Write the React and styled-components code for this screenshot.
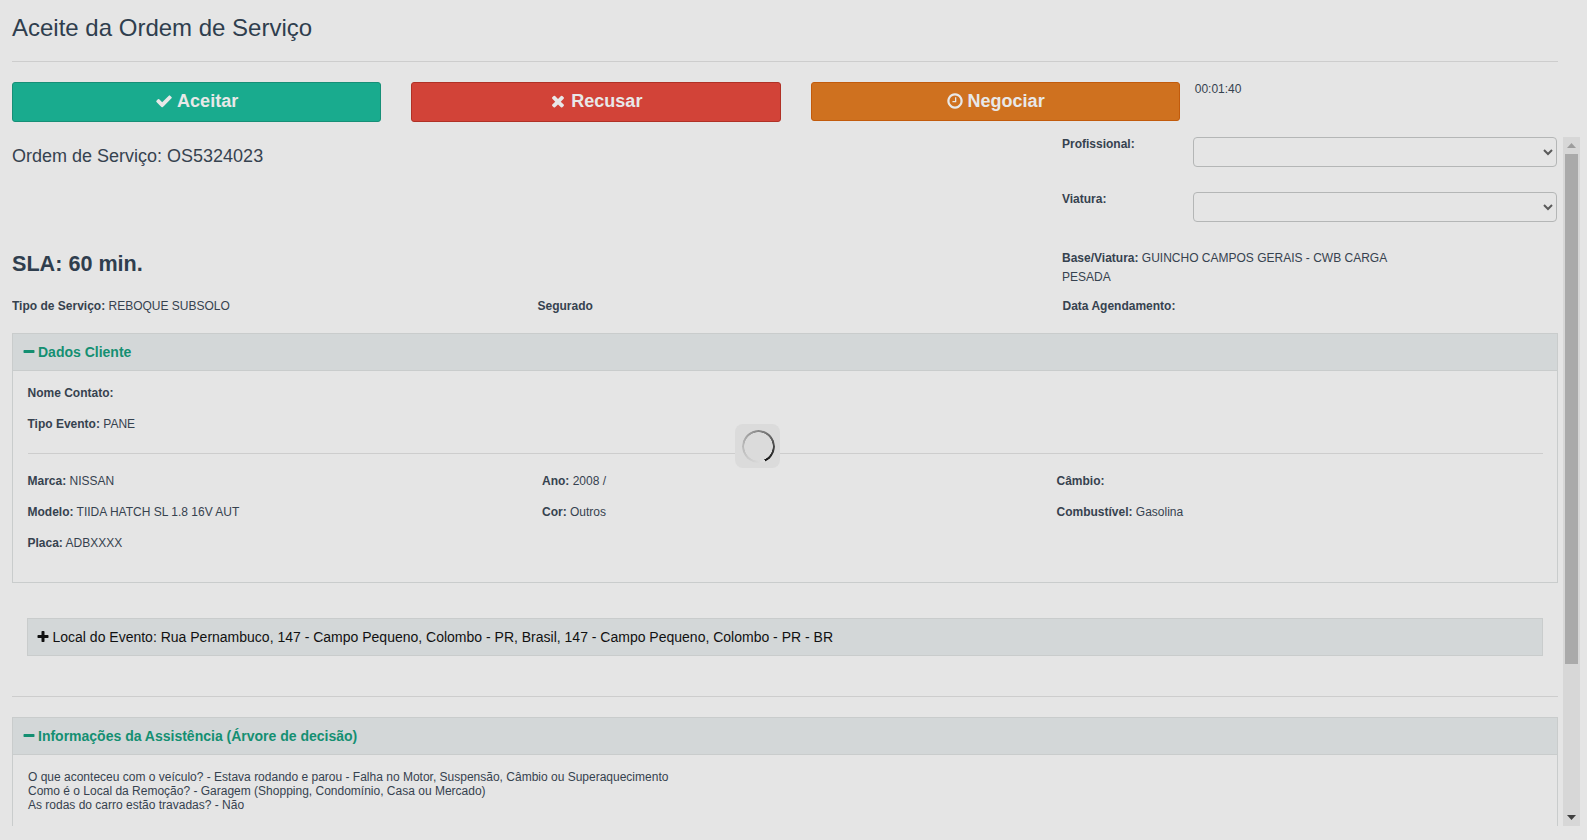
import React from "react";
import styled, { createGlobalStyle } from "styled-components";

const GlobalStyle = createGlobalStyle`
  html, body {
    margin: 0;
    padding: 0;
    background: #e5e5e5;
  }
  * {
    box-sizing: border-box;
  }
`;

const ICONS = {
  check: "M1671 566q0 40-28 68l-724 724-136 136q-28 28-68 28t-68-28l-136-136-362-362q-28-28-28-68t28-68l136-136q28-28 68-28t68 28l294 295 656-657q28-28 68-28t68 28l136 136q28 28 28 68z",
  times: "M1490 1322q0 40-28 68l-136 136q-28 28-68 28t-68-28l-294-294-294 294q-28 28-68 28t-68-28l-136-136q-28-28-28-68t28-68l294-294-294-294q-28-28-28-68t28-68l136-136q28-28 68-28t68 28l294 294 294-294q28-28 68-28t68 28l136 136q28 28 28 68t-28 68l-294 294 294 294q28 28 28 68z",
  clock: "M1024 544v448q0 14-9 23t-23 9h-320q-14 0-23-9t-9-23v-64q0-14 9-23t23-9h224v-352q0-14 9-23t23-9h64q14 0 23 9t9 23zm416 352q0-148-73-273t-198-198-273-73-273 73-198 198-73 273 73 273 198 198 273 73 273-73 198-198 73-273zm224 0q0 209-103 385.5t-279.5 279.5-385.5 103-385.5-103-279.5-279.5-103-385.5 103-385.5 279.5-279.5 385.5-103 385.5 103 279.5 279.5 103 385.5z",
  minus: "M1600 736v192q0 40-28 68t-68 28h-1216q-40 0-68-28t-28-68v-192q0-40 28-68t68-28h1216q40 0 68 28t28 68z",
  plus: "M1600 736v192q0 40-28 68t-68 28h-416v416q0 40-28 68t-68 28h-192q-40 0-68-28t-28-68v-416h-416q-40 0-68-28t-28-68v-192q0-40 28-68t68-28h416v-416q0-40 28-68t68-28h192q40 0 68 28t28 68v416h416q40 0 68 28t28 68z",
};

const Page = styled.div`
  position: relative;
  width: 1587px;
  height: 840px;
  overflow: hidden;
  padding-left: 12px;
  background: #e5e5e5;
  color: #36424f;
  font-family: "Liberation Sans", Arial, sans-serif;
  font-size: 12px;
`;
const Title = styled.h3`
  margin: 0;
  height: 61px;
  padding-top: 14px;
  font-size: 24px;
  font-weight: 400;
  line-height: 28px;
  color: #2f3e4e;
`;
const Divider = styled.hr`
  width: ${(props) => props.width || "1546px"};
  height: 1px;
  margin: ${(props) => props.margin || "0"};
  border: none;
  background: #cdcdcd;
`;
const Actions = styled.div`
  display: flex;
  gap: 30px;
  height: 55px;
  margin-top: 20px;
`;
const ActionButton = styled.button`
  display: flex;
  align-items: center;
  justify-content: center;
  gap: 4px;
  width: 369.25px;
  height: ${(props) => props.h || 40}px;
  padding: 0 0 ${(props) => (props.h || 40) - 38}px;
  border: 1px solid ${(props) => props.edge};
  border-radius: 3px;
  background: ${(props) => props.bg};
  color: #e8e8e8;
  font-family: inherit;
  font-size: 18px;
  font-weight: 700;
  svg {
    width: 18px;
    height: 18px;
  }
`;
const Timer = styled.span`
  margin-left: -15px;
  line-height: 14px;
`;
const ScrollArea = styled.div`
  display: flex;
  gap: 5px;
  height: 689px;
`;
const Content = styled.div`
  width: 1546px;
  overflow: hidden;
`;
const Track = styled.div`
  display: flex;
  flex-direction: column;
  align-items: center;
  width: 17px;
  background: #d7d7d7;
`;
const Arrow = styled.div`
  display: flex;
  align-items: center;
  justify-content: center;
  width: 100%;
  height: 17px;
  svg {
    display: block;
  }
`;
const Thumb = styled.div`
  width: 13px;
  height: 510px;
  background: #aaaaaa;
`;
const Spacer = styled.div`
  flex: 1;
`;
const TopBlock = styled.div`
  display: flex;
  height: 159px;
`;
const TopLeft = styled.div`
  width: 1050px;
`;
const OrderTitle = styled.h4`
  margin: 0;
  padding-top: 9px;
  font-size: 18px;
  font-weight: 400;
  line-height: 21px;
`;
const Sla = styled.h3`
  margin: 84px 0 0;
  font-size: 21.6px;
  font-weight: 700;
  line-height: 26px;
  color: #2f3e4e;
`;
const TopRight = styled.div`
  width: 496px;
`;
const FormRow = styled.div`
  display: flex;
  height: 30px;
  margin-bottom: 25px;
`;
const FormLabel = styled.label`
  width: 130.5px;
  font-weight: 700;
  line-height: 14px;
`;
const Select = styled.select`
  width: 364px;
  height: 30px;
  border: 1px solid #b4b6b6;
  border-radius: 4px;
  background: transparent;
  color: #5a5a5a;
  font-family: inherit;
  font-size: 12px;
`;
const BaseInfo = styled.div`
  max-width: 345px;
  margin-top: 27px;
  line-height: 19px;
`;
const InfoRow = styled.div`
  display: grid;
  grid-template-columns: 525.5px 525px 1fr;
  height: 20px;
  margin-bottom: 17px;
  line-height: 20px;
`;
const Panel = styled.section`
  border: 1px solid #c9cccc;
  border-bottom-width: ${(props) => (props.open ? "0" : "1px")};
`;
const PanelHeader = styled.div`
  display: flex;
  align-items: center;
  gap: 2px;
  height: 37px;
  padding-left: 9px;
  border-bottom: 1px solid #c9cccc;
  background: #d3d7d8;
  color: #148f72;
  font-size: 14px;
  font-weight: 700;
  svg {
    width: 14px;
    height: 14px;
  }
`;
const PanelBody = styled.div`
  padding: ${(props) => props.padding};
`;
const Field = styled.div`
  height: 20px;
  margin-bottom: 11px;
  line-height: 20px;
`;
const Columns = styled.div`
  display: grid;
  grid-template-columns: 514.5px 514.5px 1fr;
`;
const LocalBar = styled.div`
  display: flex;
  align-items: center;
  gap: 2.5px;
  width: 1516px;
  height: 38px;
  margin: 35px 0 40px 15px;
  padding-left: 8px;
  border: 1px solid #c9cccc;
  background: #d3d7d8;
  color: #111;
  font-size: 14px;
  svg {
    width: 14px;
    height: 14px;
  }
`;
const AnswerList = styled.div`
  line-height: 14px;
`;
const SpinnerBox = styled.div`
  position: absolute;
  left: 735px;
  top: 424px;
  display: flex;
  align-items: center;
  justify-content: center;
  width: 45px;
  height: 44px;
  padding-left: 1px;
  border-radius: 8px;
  background: #dbdbdb;
`;
const Ring = styled.div`
  width: 33px;
  height: 33px;
  border-radius: 50%;
  background: conic-gradient(from 156deg, #e2e2e2 0%, #b5b5b5 35%, #777 65%, #111 100%);
  -webkit-mask: radial-gradient(circle, transparent 14px, #000 14.5px);
  mask: radial-gradient(circle, transparent 14px, #000 14.5px);
`;

const Icon = ({ name }) => (
  <svg viewBox="0 0 1792 1792" fill="currentColor">
    <path d={ICONS[name]} />
  </svg>
);

const App = () => {
  return (
    <Page>
      <GlobalStyle />
      <Title>Aceite da Ordem de Serviço</Title>
      <Divider />
      <Actions>
        <ActionButton bg="#19ab8e" edge="#168f77">
          <Icon name="check" /> Aceitar
        </ActionButton>
        <ActionButton bg="#d24338" edge="#b03126">
          <Icon name="times" /> Recusar
        </ActionButton>
        <ActionButton bg="#cf711f" edge="#c25b0c" h={39}>
          <Icon name="clock" /> Negociar
        </ActionButton>
        <Timer>00:01:40</Timer>
      </Actions>
      <ScrollArea>
        <Content>
          <TopBlock>
            <TopLeft>
              <OrderTitle>Ordem de Serviço: OS5324023</OrderTitle>
              <Sla>SLA: 60 min.</Sla>
            </TopLeft>
            <TopRight>
              <FormRow>
                <FormLabel>Profissional:</FormLabel>
                <Select />
              </FormRow>
              <FormRow>
                <FormLabel>Viatura:</FormLabel>
                <Select />
              </FormRow>
              <BaseInfo>
                <b>Base/Viatura:</b> GUINCHO CAMPOS GERAIS - CWB CARGA PESADA
              </BaseInfo>
            </TopRight>
          </TopBlock>
          <InfoRow>
            <div>
              <b>Tipo de Serviço:</b> REBOQUE SUBSOLO
            </div>
            <div>
              <b>Segurado</b>
            </div>
            <div>
              <b>Data Agendamento:</b>
            </div>
          </InfoRow>
          <Panel>
            <PanelHeader>
              <Icon name="minus" /> Dados Cliente
            </PanelHeader>
            <PanelBody padding="12px 14.5px 18px">
              <Field>
                <b>Nome Contato:</b>
              </Field>
              <Field>
                <b>Tipo Evento:</b> PANE
              </Field>
              <Divider width="100%" margin="19px 0 17px" />
              <Columns>
                <Field>
                  <b>Marca:</b> NISSAN
                </Field>
                <Field>
                  <b>Ano:</b> 2008 /
                </Field>
                <Field>
                  <b>Câmbio:</b>
                </Field>
                <Field>
                  <b>Modelo:</b> TIIDA HATCH SL 1.8 16V AUT
                </Field>
                <Field>
                  <b>Cor:</b> Outros
                </Field>
                <Field>
                  <b>Combustível:</b> Gasolina
                </Field>
                <Field>
                  <b>Placa:</b> ADBXXXX
                </Field>
              </Columns>
            </PanelBody>
          </Panel>
          <LocalBar>
            <Icon name="plus" /> Local do Evento: Rua Pernambuco, 147 - Campo Pequeno, Colombo - PR, Brasil, 147 - Campo Pequeno, Colombo - PR - BR
          </LocalBar>
          <Divider margin="0 0 20px" />
          <Panel open>
            <PanelHeader>
              <Icon name="minus" /> Informações da Assistência (Árvore de decisão)
            </PanelHeader>
            <PanelBody padding="15px 15px 40px">
              <AnswerList>
                <div>O que aconteceu com o veículo? - Estava rodando e parou - Falha no Motor, Suspensão, Câmbio ou Superaquecimento</div>
                <div>Como é o Local da Remoção? - Garagem (Shopping, Condomínio, Casa ou Mercado)</div>
                <div>As rodas do carro estão travadas? - Não</div>
              </AnswerList>
            </PanelBody>
          </Panel>
        </Content>
        <Track>
          <Arrow>
            <svg width="9" height="5" viewBox="0 0 9 5">
              <path d="M4.5 0 9 5H0z" fill="#9d9d9d" />
            </svg>
          </Arrow>
          <Thumb />
          <Spacer />
          <Arrow>
            <svg width="9" height="5" viewBox="0 0 9 5">
              <path d="M0 0h9L4.5 5z" fill="#3f3f3f" />
            </svg>
          </Arrow>
        </Track>
      </ScrollArea>
      <SpinnerBox>
        <Ring />
      </SpinnerBox>
    </Page>
  );
};

export default App;
